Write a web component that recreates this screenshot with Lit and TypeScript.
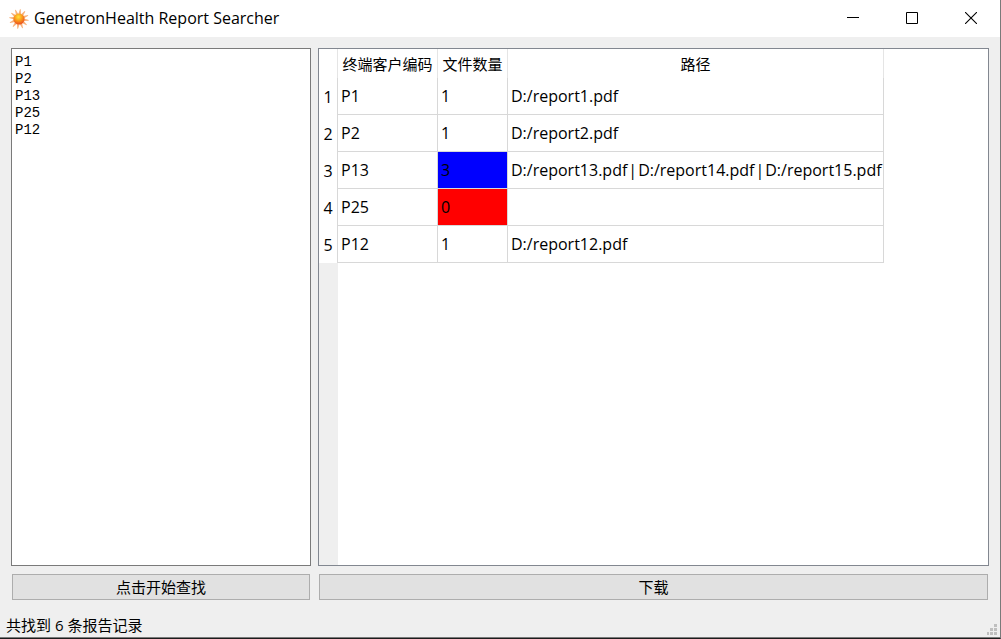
import { LitElement, html, css, svg } from "lit";
import { customElement, state } from "lit/decorators.js";
import { classMap } from "lit/directives/class-map.js";

interface ReportRow {
  code: string;
  count: number;
  paths: string[];
}

@customElement("app-root")
export class AppRoot extends LitElement {
  static styles = css`
    :host {
      display: flex;
      flex-direction: column;
      box-sizing: border-box;
      height: 100vh;
      background: #efefef;
      border-right: 1px solid #7a7a7a;
      border-bottom: 1px solid #1c1c1c;
      box-shadow: inset 0 -1px #7a7a7a;
      padding-bottom: 1px;
      color: #000;
      font: 15px/20px "Open Sans", "Noto Sans CJK SC", sans-serif;
    }
    .titlebar {
      display: flex;
      align-items: center;
      height: 37px;
      background: #fff;
      padding-left: 9px;
    }
    .logo {
      width: 20px;
      height: 20px;
      margin-right: 5px;
    }
    .title {
      flex: 1;
      margin: 0;
      padding-bottom: 2px;
      font-size: 16px;
      font-weight: 400;
    }
    .winbtn {
      display: flex;
      align-items: center;
      justify-content: center;
      width: 59px;
      height: 37px;
      padding: 0 0 1px;
      border: 0;
      background: none;
    }
    .body {
      flex: 1;
      min-height: 0;
      display: grid;
      grid-template-columns: minmax(0, 300fr) minmax(0, 671fr);
      grid-template-rows: minmax(0, 1fr) auto;
      gap: 7px;
      padding: 11px 11px 12px;
    }
    .codes {
      box-sizing: border-box;
      width: 100%;
      height: 100%;
      margin: 0;
      padding: 5px 3px;
      border: 1px solid #7a7a7a;
      border-radius: 0;
      outline: none;
      resize: none;
      background: #fff;
      color: #000;
      font: 14px/17px "Liberation Mono", monospace;
    }
    .view {
      display: flex;
      flex-direction: column;
      align-items: flex-start;
      min-width: 0;
      overflow: auto;
      border: 1px solid #828790;
      background: #fff;
    }
    .gutter {
      flex: 1;
      width: 19px;
      background: #efefef;
    }
    .grid {
      border-collapse: separate;
      border-spacing: 0;
      white-space: nowrap;
    }
    .grid th,
    .grid td {
      box-sizing: border-box;
      padding: 0 1px 0 3px;
      font-weight: 400;
      border-right: 1px solid #d8d8d8;
    }
    .grid thead th {
      height: 29px;
      padding: 0 4px;
      border-right-color: #e5e5e5;
    }
    .grid td {
      height: 37px;
      text-align: left;
      border-bottom: 1px solid #d8d8d8;
      font-size: 16px;
    }
    .grid tbody th {
      padding: 0;
      font-size: 16px;
    }
    .grid .index {
      width: 19px;
      padding: 0;
    }
    .grid .code {
      width: 100px;
    }
    .grid .count {
      width: 70px;
    }
    .grid .path {
      min-width: 376px;
    }
    .grid .many {
      background: #00f;
    }
    .grid .none {
      background: #f00;
    }
    .sep {
      display: inline-block;
      padding: 0 1px;
    }
    .action {
      height: 26px;
      margin: 1px 1px 0;
      padding: 0;
      border: 1px solid #adadad;
      background: #e1e1e1;
      color: #000;
      font: 15px/20px "Noto Sans CJK SC", sans-serif;
    }
    .status {
      display: flex;
      align-items: center;
      justify-content: space-between;
      height: 25px;
      padding-left: 6px;
    }
    .grip {
      align-self: flex-end;
      margin: 0 3px 2px 0;
    }
  `;

  @state() private codes = ["P1", "P2", "P13", "P25", "P12"].join("\n");

  @state() private rows: ReportRow[] = [
    { code: "P1", count: 1, paths: ["D:/report1.pdf"] },
    { code: "P2", count: 1, paths: ["D:/report2.pdf"] },
    { code: "P13", count: 3, paths: ["D:/report13.pdf", "D:/report14.pdf", "D:/report15.pdf"] },
    { code: "P25", count: 0, paths: [] },
    { code: "P12", count: 1, paths: ["D:/report12.pdf"] },
  ];

  private get total() {
    return this.rows.reduce((sum, row) => sum + row.count, 0);
  }

  private renderRow(row: ReportRow, i: number) {
    const tone = { count: true, many: row.count > 1, none: row.count === 0 };
    return html`<tr>
      <th class="index" scope="row">${i + 1}</th>
      <td class="code">${row.code}</td>
      <td class=${classMap(tone)}>${row.count}</td>
      <td class="path">${row.paths.map((path, n) => (n ? html`<span class="sep"> | </span>${path}` : path))}</td>
    </tr>`;
  }

  render() {
    return html`
      <header class="titlebar">
        <svg class="logo" viewBox="0 0 20 20" aria-hidden="true">
          <defs>
            <radialGradient id="sun" cx="45%" cy="32%" r="68%">
              <stop offset="0" stop-color="#ffe23c" />
              <stop offset="0.45" stop-color="#fba21c" />
              <stop offset="1" stop-color="#ea4a1e" />
            </radialGradient>
          </defs>
          <g fill="#f8b27a">
            ${Array.from({ length: 12 }, (_, n) => n * 30 + 8).map(
              (a) => svg`<path d="M8.7 5 9.6 0.2H10.4L11.3 5Z" transform="rotate(${a} 10 10)" />`
            )}
          </g>
          <circle cx="10" cy="10" r="5.6" fill="url(#sun)" />
        </svg>
        <h1 class="title">GenetronHealth Report Searcher</h1>
        <button class="winbtn" aria-label="Minimize">
          <svg width="12" height="12"><path d="M0 5.5H12" stroke="#000" /></svg>
        </button>
        <button class="winbtn" aria-label="Maximize">
          <svg width="12" height="12"><path d="M.5 .5H11.5V11.5H.5Z" fill="none" stroke="#000" /></svg>
        </button>
        <button class="winbtn" aria-label="Close">
          <svg width="12" height="12"><path d="M0 0 12 12M12 0 0 12" stroke="#000" stroke-width="1.1" /></svg>
        </button>
      </header>
      <main class="body">
        <textarea class="codes" aria-label="终端客户编码" spellcheck="false" .value=${this.codes}></textarea>
        <div class="view">
          <table class="grid">
            <thead>
              <tr>
                <th class="index"></th>
                <th class="code" scope="col">终端客户编码</th>
                <th class="count" scope="col">文件数量</th>
                <th class="path" scope="col">路径</th>
              </tr>
            </thead>
            <tbody>
              ${this.rows.map((row, i) => this.renderRow(row, i))}
            </tbody>
          </table>
          <div class="gutter"></div>
        </div>
        <button class="action">点击开始查找</button>
        <button class="action">下载</button>
      </main>
      <footer class="status">
        <span role="status">共找到 ${this.total} 条报告记录</span>
        <svg class="grip" width="10" height="11" fill="#bfbfbf" aria-hidden="true">
          <path d="M7 0h3v3h-3zM3 4h3v3h-3zM7 4h3v3h-3zM0 8h2v3h-2zM3 8h3v3h-3zM7 8h3v3h-3z" />
        </svg>
      </footer>
    `;
  }
}
